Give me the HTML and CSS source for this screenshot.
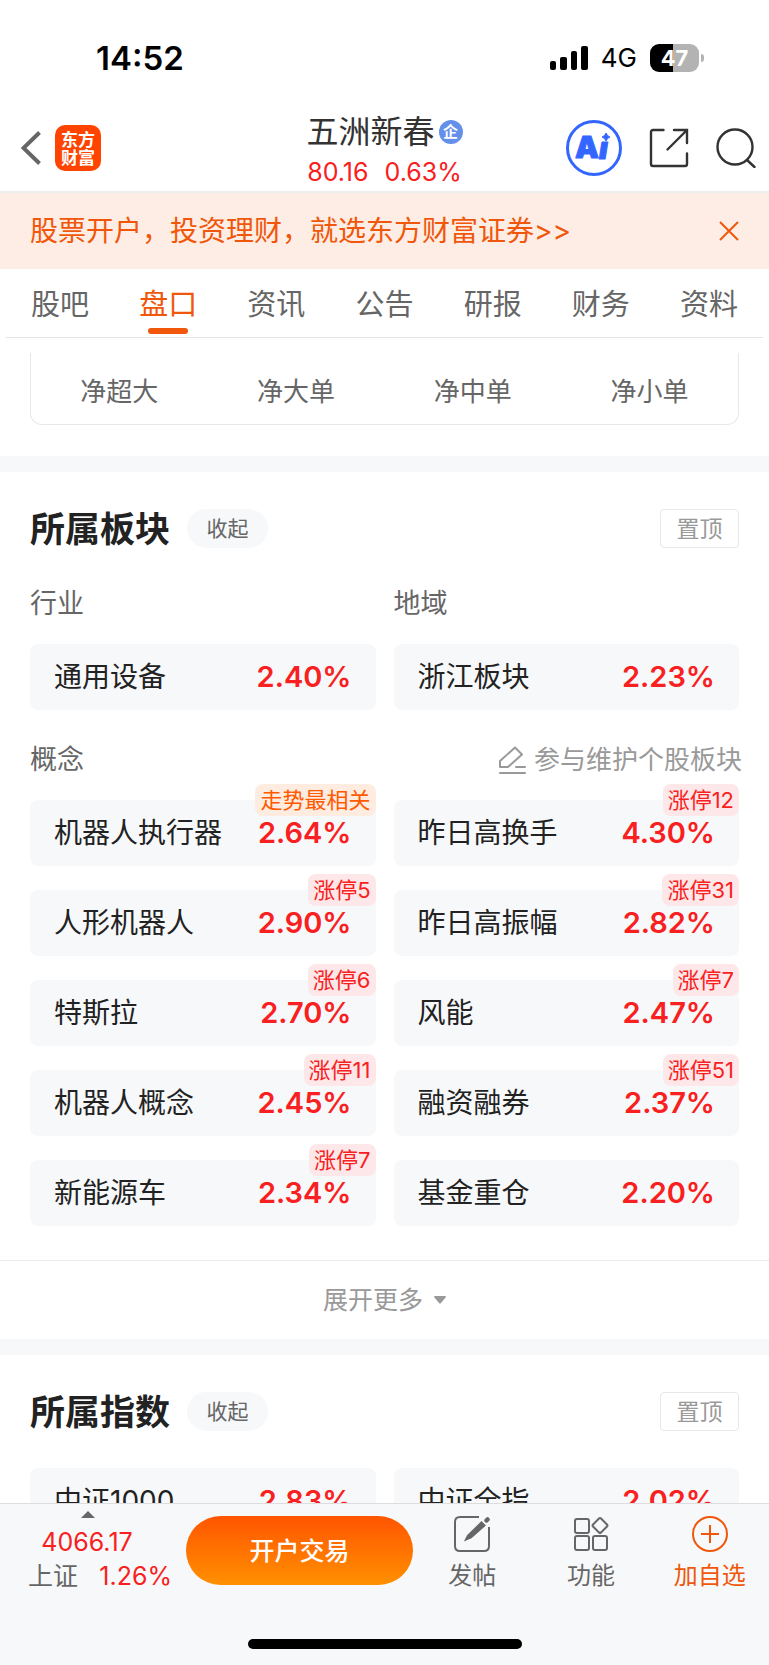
FILE: index.html
```html
<!DOCTYPE html>
<html lang="zh-CN">
<head>
    <meta charset="UTF-8">
    <meta name="viewport" content="width=device-width, initial-scale=1.0">
    <title>五洲新春</title>
    <link rel="stylesheet" href="styles.css">
</head>
<body>
    <div class="status-bar">
        <span class="clock">14:52</span>
        <div class="status-icons">
            <svg width="38" height="24" viewBox="0 0 38 24">
                <rect x="0" y="15" width="6" height="9" rx="2"/>
                <rect x="10" y="11" width="7" height="13" rx="2"/>
                <rect x="21" y="5" width="6" height="19" rx="2"/>
                <rect x="31" y="0" width="7" height="24" rx="2"/>
            </svg>
            <span class="network">4G</span>
            <span class="battery">47</span>
        </div>
    </div>

    <header class="header">
        <div class="header-left">
            <button class="icon-btn" aria-label="返回">
                <svg width="20" height="34" viewBox="0 0 20 34" fill="none" stroke="#666" stroke-width="4">
                    <path d="M18.500 1.500L2.500 17L18.500 32.500"/>
                </svg>
            </button>
            <span class="logo">东方<br>财富</span>
        </div>
        <div class="stock">
            <h1>五洲新春<span class="ent-badge">企</span></h1>
            <div class="quote"><span>80.16</span><span>0.63%</span></div>
        </div>
        <div class="header-right">
            <button class="icon-btn" aria-label="AI">
                <svg width="56" height="56" viewBox="0 0 56 56">
                    <circle cx="28" cy="28" r="26.500" fill="none" stroke="#36f" stroke-width="3"/>
                    <g class="ai-text">
                        <text x="9" y="38">A</text>
                        <text x="33" y="39" font-style="italic">ı</text>
                    </g>
                    <path d="M40 13Q41 16 44 17Q41 18 40 21Q39 18 36 17Q39 16 40 13Z" fill="#36f" stroke="#36f"/>
                </svg>
            </button>
            <button class="icon-btn" aria-label="分享">
                <svg width="40" height="40" viewBox="0 0 40 40" fill="none" stroke="#333" stroke-width="2.400" stroke-linecap="round">
                    <path d="M14.500 2H4Q2 2 2 4V36Q2 38 4 38H36Q38 38 38 36V25.500M25 2H38V15M38 2L18.500 21.500"/>
                </svg>
            </button>
            <button class="icon-btn" aria-label="搜索">
                <svg width="40" height="40" viewBox="0 0 40 40" fill="none" stroke="#333" stroke-width="2.400" stroke-linecap="round">
                    <circle cx="19" cy="19" r="17.500"/>
                    <path d="M31 32L38.500 39"/>
                </svg>
            </button>
        </div>
    </header>

    <div class="banner">
        <a href="#">股票开户，投资理财，就选东方财富证券&gt;&gt;</a>
        <button class="icon-btn" aria-label="关闭">
            <svg width="20" height="20" viewBox="0 0 20 20" fill="none" stroke="#f0570a" stroke-width="2">
                <path d="M1 1L19 19M19 1L1 19"/>
            </svg>
        </button>
    </div>

    <nav class="tabs">
        <a href="#">股吧</a>
        <a href="#" class="active">盘口</a>
        <a href="#">资讯</a>
        <a href="#">公告</a>
        <a href="#">研报</a>
        <a href="#">财务</a>
        <a href="#">资料</a>
    </nav>

    <main class="content">
        <section class="flow-section">
            <div class="flow-box">
                <span>净超大</span>
                <span>净大单</span>
                <span>净中单</span>
                <span>净小单</span>
            </div>
        </section>

        <section class="section">
            <div class="section-head">
                <h2>所属板块</h2>
                <button class="fold-btn">收起</button>
                <button class="top-btn">置顶</button>
            </div>
            <div class="grid labels">
                <h3>行业</h3>
                <h3>地域</h3>
            </div>
            <div class="grid">
                <a href="#" class="card"><span>通用设备</span><b>2.40%</b></a>
                <a href="#" class="card"><span>浙江板块</span><b>2.23%</b></a>
            </div>
            <div class="concept-head">
                <h3>概念</h3>
                <a href="#" class="edit-link">
                    <svg width="28" height="28" viewBox="0 0 28 28" fill="none" stroke="#999" stroke-width="2" stroke-linecap="round" stroke-linejoin="round">
                        <path d="M2 21V15L17 1.500L24 8.500L10 21ZM18 21H27M2 27H27"/>
                    </svg>
                    参与维护个股板块
                </a>
            </div>
            <div class="grid">
                <a href="#" class="card"><span>机器人执行器</span><b>2.64%</b><i class="tag hot">走势最相关</i></a>
                <a href="#" class="card"><span>昨日高换手</span><b>4.30%</b><i class="tag">涨停12</i></a>
                <a href="#" class="card"><span>人形机器人</span><b>2.90%</b><i class="tag">涨停5</i></a>
                <a href="#" class="card"><span>昨日高振幅</span><b>2.82%</b><i class="tag">涨停31</i></a>
                <a href="#" class="card"><span>特斯拉</span><b>2.70%</b><i class="tag">涨停6</i></a>
                <a href="#" class="card"><span>风能</span><b>2.47%</b><i class="tag">涨停7</i></a>
                <a href="#" class="card"><span>机器人概念</span><b>2.45%</b><i class="tag">涨停11</i></a>
                <a href="#" class="card"><span>融资融券</span><b>2.37%</b><i class="tag">涨停51</i></a>
                <a href="#" class="card"><span>新能源车</span><b>2.34%</b><i class="tag">涨停7</i></a>
                <a href="#" class="card"><span>基金重仓</span><b>2.20%</b></a>
            </div>
        </section>
        <button class="more-btn">
            展开更多
            <svg width="12" height="8" viewBox="0 0 12 8"><path d="M1 0H11Q12 0 12 1L7 7Q6 8 5 7L0 1Q0 0 1 0Z" fill="#999"/></svg>
        </button>

        <section class="section">
            <div class="section-head">
                <h2>所属指数</h2>
                <button class="fold-btn">收起</button>
                <button class="top-btn">置顶</button>
            </div>
            <div class="grid">
                <a href="#" class="card"><span>中证1000</span><b>2.83%</b></a>
                <a href="#" class="card"><span>中证全指</span><b>2.02%</b></a>
            </div>
        </section>
    </main>

    <footer class="footer">
        <div class="toolbar">
            <a href="#" class="index-quote">
                <svg width="14" height="7" viewBox="0 0 14 7"><path d="M0 7L7 0L14 7Z" fill="#666"/></svg>
                <span class="red">4066.17</span>
                <span class="index-row">上证<span class="red">1.26%</span></span>
            </a>
            <button class="trade-btn">开户交易</button>
            <a href="#" class="tool">
                <svg width="36" height="36" viewBox="0 0 36 36" fill="none" stroke="#666" stroke-width="2">
                    <path d="M25 1H6Q1 1 1 6V30Q1 35 6 35H30Q35 35 35 30V11"/>
                    <path d="M12 23.500L14 19.500L27.500 6.500L30.500 9.500L17 21.500Z" fill="#666"/>
                    <path d="M32.500 4.500L33.500 3.500" stroke-width="4.500" stroke-linecap="round"/>
                </svg>
                发帖
            </a>
            <a href="#" class="tool">
                <svg width="36" height="36" viewBox="0 0 36 36" fill="none" stroke="#666" stroke-width="2" stroke-linejoin="round">
                    <rect x="2" y="3" width="14" height="14" rx="2"/>
                    <rect x="2" y="20" width="14" height="14" rx="2"/>
                    <rect x="20" y="20" width="14" height="14" rx="2"/>
                    <path d="M26 2.500Q27 1.500 28 2.500L34 8.500Q35 9.500 34 10.500L28 16.500Q27 17.500 26 16.500L20 10.500Q19 9.500 20 8.500Z"/>
                </svg>
                功能
            </a>
            <a href="#" class="tool add">
                <svg width="36" height="36" viewBox="0 0 36 36" fill="none" stroke="#f0570a" stroke-width="2">
                    <circle cx="18" cy="18" r="17"/>
                    <path d="M9 18H27M18 9V27"/>
                </svg>
                加自选
            </a>
        </div>
        <div class="home-indicator"></div>
    </footer>
</body>
</html>
```
FILE: styles.css
```css
* {
    box-sizing: border-box;
}

body {
    font-family: Inter, 'Noto Sans CJK SC', sans-serif;
    background-color: #fff;
    color: #222;
    display: flex;
    flex-direction: column;
    height: 100vh;
    margin: 0;
    overflow: hidden;
}

h1, h2, h3 {
    margin: 0;
    font-weight: 400;
}

a {
    color: inherit;
    text-decoration: none;
}

button {
    font-family: inherit;
    padding: 0;
    border: none;
    background: none;
    cursor: pointer;
}

svg {
    display: block;
    flex-shrink: 0;
}

/* status bar */
.status-bar {
    display: flex;
    justify-content: space-between;
    align-items: center;
    height: 102px;
    padding: 13px 65px 0 96px;
    color: #000;
}

.clock {
    font-size: 33px;
    font-weight: 600;
}

.status-icons {
    display: flex;
    align-items: center;
    gap: 13px;
}

.network {
    font-size: 26px;
}

.battery {
    position: relative;
    width: 49px;
    height: 28px;
    margin-right: 5px;
    border-radius: 9px;
    background: linear-gradient(to right, #000 47%, #b3b3b3 47%);
    color: #fff;
    font-size: 22px;
    font-weight: 700;
    line-height: 28px;
    text-align: center;
}

.battery::after {
    content: "";
    position: absolute;
    left: 51px;
    top: 10px;
    width: 3px;
    height: 8px;
    border-radius: 0 3px 3px 0;
    background: #b3b3b3;
}

/* header */
.header {
    display: grid;
    grid-template-columns: 1fr auto 1fr;
    align-items: center;
    height: 91px;
    padding: 1px 13px 0;
    border-bottom: 2px solid #eee;
}

.header-left, .header-right {
    display: flex;
    align-items: center;
}

.header-left {
    gap: 14px;
    padding-left: 8px;
}

.header-right {
    justify-content: flex-end;
    gap: 27px;
}

.logo {
    width: 46px;
    height: 46px;
    padding-top: 6px;
    border-radius: 10px;
    background: #ff4400;
    color: #fff;
    font-size: 17px;
    font-weight: 700;
    line-height: 18px;
    text-align: center;
}

.stock {
    padding-top: 9px;
}

.stock h1 {
    display: flex;
    align-items: center;
    gap: 4px;
    font-size: 32px;
    line-height: 40px;
    color: #333;
}

.ent-badge {
    width: 24px;
    height: 24px;
    border-radius: 50%;
    background: #6490eb;
    color: #fff;
    font-size: 15px;
    font-weight: 700;
    line-height: 23px;
    text-align: center;
}

.quote {
    display: flex;
    justify-content: center;
    gap: 16px;
    color: #f82020;
    font-size: 25px;
    line-height: 40px;
}

.ai-text {
    fill: #36f;
    stroke: #36f;
    stroke-linejoin: round;
    font-size: 30px;
    font-weight: 900;
}

/* banner */
.banner {
    display: flex;
    justify-content: space-between;
    align-items: center;
    height: 76px;
    padding: 0 30px;
    background: #fdede4;
    color: #f0570a;
    font-size: 28px;
    line-height: 40px;
}

/* tabs */
.tabs {
    display: flex;
    height: 69px;
    margin: 0 6px;
    border-bottom: 1px solid #e5e5e5;
    color: #666;
    font-size: 29px;
    line-height: 71px;
    text-align: center;
}

.tabs a {
    position: relative;
    flex: 1;
}

.tabs .active {
    color: #f0570a;
}

.tabs .active::after {
    content: "";
    position: absolute;
    left: calc(50% - 20px);
    bottom: 3px;
    width: 40px;
    height: 6px;
    border-radius: 3px;
    background: #f0570a;
}

/* content */
.content {
    flex: 1;
    min-height: 0;
    padding-top: 15px;
    overflow-y: auto;
    scrollbar-width: none;
}

.flow-section {
    padding: 0 30px 31px;
}

.flow-box {
    display: grid;
    grid-template-columns: repeat(4, 1fr);
    height: 72px;
    border: 1px solid #e8e8e8;
    border-top: none;
    border-radius: 0 0 12px 12px;
    color: #666;
    font-size: 26px;
    line-height: 78px;
    text-align: center;
}

.section {
    padding: 37px 30px 34px;
    border-top: 16px solid #f7f8fa;
}

.section-head {
    display: flex;
    align-items: center;
    height: 39px;
    margin-bottom: 37px;
}

.section-head h2 {
    font-size: 35px;
    font-weight: 700;
    line-height: 40px;
}

.fold-btn, .top-btn {
    height: 39px;
    padding-bottom: 3px;
}

.fold-btn {
    width: 81px;
    margin-left: 17px;
    border-radius: 20px;
    background: #f7f8fa;
    color: #666;
    font-size: 21px;
}

.top-btn {
    width: 79px;
    margin-left: auto;
    border: 1px solid #e8e8e8;
    border-radius: 4px;
    color: #999;
    font-size: 23px;
}

.grid {
    display: grid;
    grid-template-columns: 1fr 1fr;
    gap: 24px 18px;
}

h3 {
    color: #666;
    font-size: 27px;
    line-height: 38px;
}

.labels {
    margin-bottom: 21px;
}

.card {
    position: relative;
    display: flex;
    justify-content: space-between;
    align-items: center;
    height: 66px;
    padding: 0 24px;
    border-radius: 8px;
    background: #f7f8fa;
    font-size: 28px;
    line-height: 40px;
}

.card b {
    color: #f82020;
    font-size: 29px;
    font-weight: 600;
}

.tag {
    position: absolute;
    top: -16px;
    right: 0;
    padding: 0 5px;
    border-radius: 8px;
    background: #fee7e8;
    color: #f82020;
    font-size: 22px;
    font-style: normal;
    line-height: 32px;
}

.tag.hot {
    background: #ffece1;
    color: #ff5a00;
}

.concept-head {
    display: flex;
    justify-content: space-between;
    align-items: center;
    height: 90px;
    margin-right: -3px;
    padding-top: 10px;
}

.edit-link {
    display: flex;
    align-items: center;
    gap: 8px;
    color: #999;
    font-size: 26px;
    line-height: 38px;
}

.more-btn {
    display: flex;
    justify-content: center;
    align-items: center;
    gap: 11px;
    width: 100%;
    height: 79px;
    border-top: 1px solid #ebebeb;
    color: #999;
    font-size: 25px;
    line-height: 36px;
}

/* footer */
.footer {
    height: 162px;
    border-top: 1px solid #ddd;
    background: #f7f8fa;
}

.toolbar {
    display: flex;
    height: 135px;
    padding-top: 12px;
}

.index-quote {
    position: relative;
    width: 186px;
    padding: 10px 14px 0 28px;
    color: #666;
    font-size: 25px;
}

.index-quote svg {
    position: absolute;
    left: 81px;
    top: -5px;
}

.index-quote > .red {
    display: block;
    padding-right: 26px;
    line-height: 32px;
    text-align: center;
}

.red {
    color: #f82020;
}

.index-row {
    display: flex;
    justify-content: space-between;
    line-height: 36px;
}

.trade-btn {
    width: 227px;
    height: 69px;
    padding-bottom: 4px;
    border-radius: 35px;
    background: linear-gradient(#ff5500, #ff9000);
    color: #fff;
    font-size: 25px;
    font-weight: 500;
}

.tool {
    display: flex;
    flex: 1;
    flex-direction: column;
    align-items: center;
    gap: 6px;
    color: #666;
    font-size: 24px;
    line-height: 36px;
}

.tool.add {
    color: #f0570a;
}

.home-indicator {
    width: 274px;
    height: 10px;
    margin: 0 auto;
    border-radius: 5px;
    background: #000;
}
```
